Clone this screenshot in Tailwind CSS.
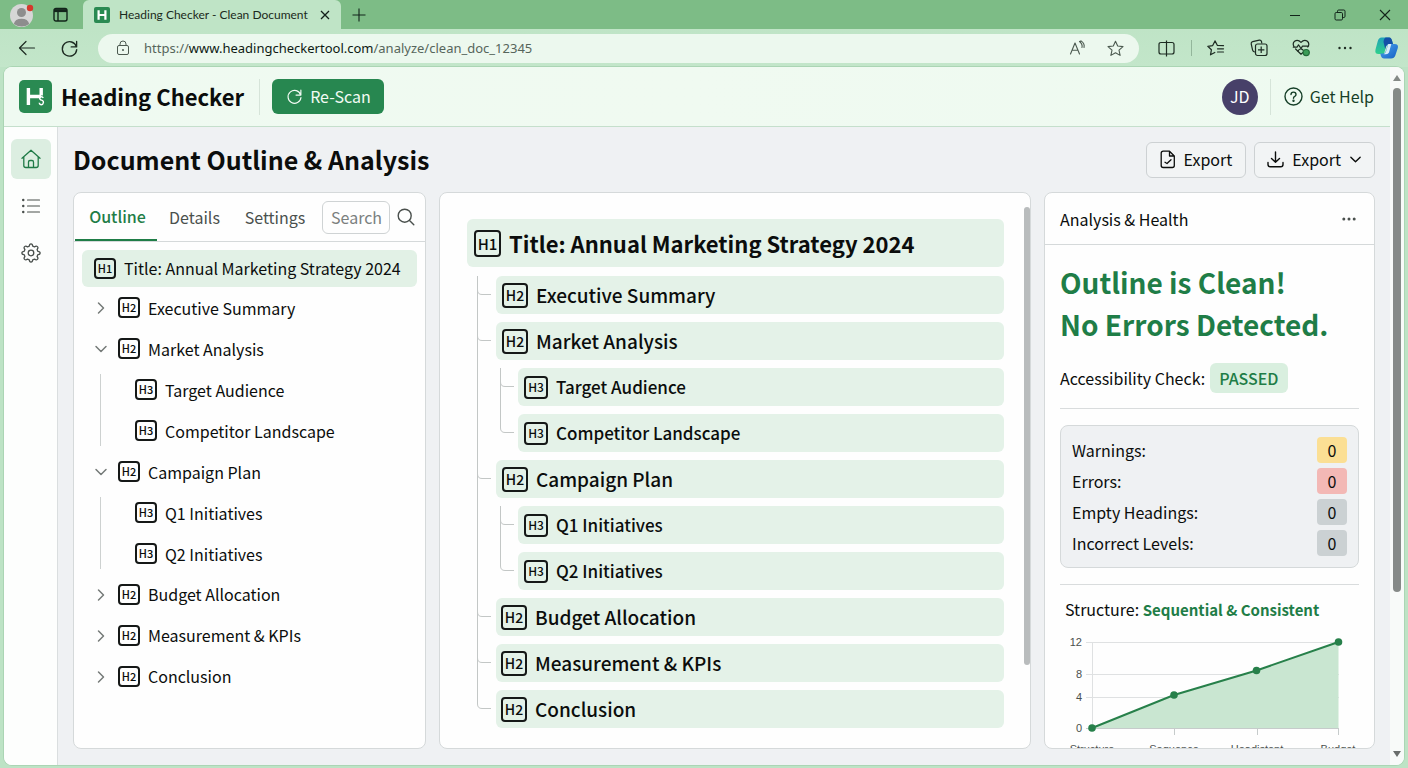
<!DOCTYPE html>
<html lang="en">
<head>
<meta charset="utf-8">
<meta name="viewport" content="width=device-width, initial-scale=1">
<title>Heading Checker - Clean Document</title>
<script src="https://cdn.jsdelivr.net/npm/@tailwindcss/browser@4"></script>
</head>
<body class="flex h-screen min-h-[600px] flex-col overflow-hidden bg-[#bde3c5] font-['Noto_Sans_CJK_SC','Noto_Sans',sans-serif] text-[16px] leading-6 text-[#0b0d0c]">

<!-- Shared symbols -->
<svg class="hidden" aria-hidden="true">
  <symbol id="chev-right" viewBox="0 0 14 14"><path d="M4.5 2 L9.5 7 L4.5 12" fill="none" stroke="currentColor" stroke-width="1.5" stroke-linecap="round" stroke-linejoin="round"/></symbol>
  <symbol id="chev-down" viewBox="0 0 14 14"><path d="M2 4.5 L7 9.5 L12 4.5" fill="none" stroke="currentColor" stroke-width="1.5" stroke-linecap="round" stroke-linejoin="round"/></symbol>
  <symbol id="rail" viewBox="0 0 30 46"><path d="M10.5 0 V46" fill="none" stroke="#c3c7c6"/></symbol>
  <symbol id="branch" viewBox="0 0 30 46"><path d="M10.5 0 V46 M10.5 14 Q10.5 18.5 15 18.5 H24" fill="none" stroke="#c3c7c6"/></symbol>
  <symbol id="branch-end" viewBox="0 0 30 46"><path d="M10.5 0 V14 Q10.5 18.5 15 18.5 H24" fill="none" stroke="#c3c7c6"/></symbol>
  <symbol id="sub" viewBox="0 0 22 46"><path d="M4.5 0 V46 M4.5 14 Q4.5 18.5 9 18.5 H18" fill="none" stroke="#c3c7c6"/></symbol>
  <symbol id="sub-end" viewBox="0 0 22 46"><path d="M4.5 0 V14 Q4.5 18.5 9 18.5 H18" fill="none" stroke="#c3c7c6"/></symbol>
  <symbol id="reload" viewBox="0 0 20 20"><path d="M17.3 8.2 A7.6 7.6 0 1 0 17.6 11.2 M17.5 2.6 V8.3 H11.8" fill="none" stroke="currentColor" stroke-width="1.4" stroke-linecap="round" stroke-linejoin="round"/></symbol>
</svg>

<!-- Tab strip -->
<div class="flex h-[29px] shrink-0 items-stretch bg-[#7dbc86]">
  <div class="flex w-[83px] items-center gap-5 rounded-br-md pl-2.5">
    <button aria-label="Profile" class="block">
      <svg width="24" height="24" viewBox="0 0 24 24"><circle cx="11.5" cy="12.5" r="11.5" fill="#d6d6d6"/><circle cx="11.5" cy="9.5" r="4.5" fill="#8d8d8d"/><path d="M3.8 21 Q5 15.8 11.5 15.8 T19.2 21 Q12 26 3.8 21Z" fill="#8d8d8d"/><circle cx="20" cy="5" r="3.2" fill="#d5382c"/></svg>
    </button>
    <button aria-label="Tab actions" class="-ml-1.5 block">
      <svg width="24" height="16" viewBox="-5 0 24 16" fill="none" stroke="#12241a" stroke-width="1.4"><rect x="1" y="1.5" width="13" height="12.5" rx="2"/><path d="M1 3.6 H14" stroke-width="3"/><path d="M5 5 V14"/></svg>
    </button>
  </div>
  <div class="flex w-[258px] items-center rounded-t-md bg-[#bfe4c6] pl-[11px]">
    <svg width="16" height="16" viewBox="0 0 16 16"><rect width="16" height="16" rx="2" fill="#2a8a52"/><path d="M4.6 3.3 V12.7 M11.4 3.3 V12.7 M4.6 8 H11.4" stroke="#fff" stroke-width="2.2"/></svg>
    <span class="ml-[9px] font-['Lato','Noto_Sans',sans-serif] text-xs whitespace-nowrap text-[#1b2a20]">Heading Checker - Clean Document</span>
    <button aria-label="Close tab" class="mr-2.5 ml-auto block"><svg width="12" height="12" viewBox="0 0 12 12"><path d="M2 2 L10 10 M10 2 L2 10" stroke="#12201a" stroke-width="1.3"/></svg></button>
  </div>
  <button aria-label="New tab" class="ml-[11px]"><svg width="14" height="14" viewBox="0 0 14 14"><path d="M7 .5 V13.5 M.5 7 H13.5" stroke="#12241a" stroke-width="1.1"/></svg></button>
  <div class="ml-auto flex items-center gap-[33px] pr-[17px]">
    <button aria-label="Minimize"><svg width="12" height="12" viewBox="0 0 12 12"><path d="M1 6.5 H11" stroke="#12241a"/></svg></button>
    <button aria-label="Restore"><svg width="12" height="12" viewBox="0 0 12 12" fill="none" stroke="#12241a"><rect x="1" y="3.5" width="7.5" height="7.5" rx="1.2"/><path d="M3.5 3.5 V2.2 Q3.5 1 4.7 1 H9.8 Q11 1 11 2.2 V7.3 Q11 8.5 9.8 8.5 H8.5"/></svg></button>
    <button aria-label="Close window"><svg width="12" height="12" viewBox="0 0 12 12"><path d="M1 1 L11 11 M11 1 L1 11" stroke="#12241a" stroke-width="1.1"/></svg></button>
  </div>
</div>

<!-- Address bar -->
<div class="flex h-[38px] shrink-0 items-center bg-linear-to-b from-[#bfe4c6] to-[#c3e6ca] pr-[9px] pl-[18px] text-[#1d2b22]">
  <button aria-label="Back"><svg width="18" height="16" viewBox="0 0 18 16" fill="none" stroke="currentColor" stroke-width="1.2" stroke-linecap="round" stroke-linejoin="round"><path d="M16.5 8 H1.5 M8 1.5 L1.5 8 L8 14.5"/></svg></button>
  <button aria-label="Reload" class="ml-6"><svg width="19" height="19"><use href="#reload"/></svg></button>
  <div class="ml-[19px] flex h-[29px] flex-1 items-center rounded-full bg-[#ecf8ee] pr-[15px] pl-[18px]">
    <svg width="14" height="16" viewBox="0 0 14 16" fill="none" stroke="#4c5a50"><rect x="1.5" y="5.5" width="11" height="9" rx="1.5"/><path d="M4 5.5 V4 Q4 1 7 1 T10 4 V5.5"/><circle cx="7" cy="10" r=".6" fill="#4c5a50"/></svg>
    <div role="textbox" aria-label="Address" contenteditable="true" spellcheck="false" class="ml-3.5 flex-1 font-['Noto_Sans','Open_Sans',sans-serif] text-[13px] text-[#56655b]">https://<span class="text-[#0e1a13]">www.headingcheckertool.com</span>/analyze/clean_doc_12345</div>
    <button aria-label="Read aloud"><svg width="18" height="16" viewBox="0 0 18 16" fill="none" stroke="#4c5a50" stroke-width="1.1" stroke-linecap="round" stroke-linejoin="round"><path d="M1.5 14 L6 3 L10.5 14 M3 10.3 H9"/><path d="M10.5 1.5 Q13.8 4 13 7.5 M12 .9 Q16 3.5 15 7.5 M10.5 1.5 L12 .9"/></svg></button>
    <button aria-label="Add to favourites" class="ml-5"><svg width="17" height="17" viewBox="0 0 17 17" fill="none" stroke="#4c5a50" stroke-width="1.1" stroke-linejoin="round"><path d="M8.5 1.2 L10.7 6 L16 6.6 L12 10.1 L13.1 15.4 L8.5 12.7 L3.9 15.4 L5 10.1 L1 6.6 L6.3 6 Z"/></svg></button>
  </div>
  <button aria-label="Split screen" class="ml-[19px]"><svg width="17" height="17" viewBox="0 0 17 17" fill="none" stroke="currentColor" stroke-width="1.2"><path d="M8.5 2.5 H3 Q1 2.5 1 4.5 V12 Q1 14 3 14 H8.5 M8.5 2.5 H14 Q16 2.5 16 4.5 V12 Q16 14 14 14 H8.5 M8.5 .5 V16.5"/></svg></button>
  <span class="ml-4 h-4 w-px bg-[#93b69b]"></span>
  <button aria-label="Favourites" class="ml-[15px]"><svg width="18" height="17" viewBox="0 0 18 17" fill="none" stroke="currentColor" stroke-width="1.2" stroke-linejoin="round" stroke-linecap="round"><path d="M10.3 5.3 L8 .9 L5.7 5.6 L.8 6.3 L4.4 9.8 L3.5 14.8 L7.8 12.5 M10.3 5.3 L16.5 5.6 M10.5 8.8 H16.5 M10.5 12 H16.5"/></svg></button>
  <button aria-label="Collections" class="ml-[25px]"><svg width="18" height="18" viewBox="0 0 18 18" fill="none" stroke="currentColor" stroke-width="1.2"><path d="M4.8 12.8 Q3 13 2.6 11.2 L1.2 4.8 Q.9 3 2.7 2.6 L9.3 1.2 Q11 .9 11.5 2.5 L11.8 4.5"/><rect x="5.5" y="5" width="11.500" height="11.500" rx="2"/><path d="M11.2 7.6 V14 M8 10.8 H14.4"/></svg></button>
  <button aria-label="Browser essentials" class="ml-6"><svg width="19" height="18" viewBox="0 0 19 18" fill="none" stroke="currentColor" stroke-width="1.2" stroke-linejoin="round" stroke-linecap="round"><path d="M2.2 8 Q0 4.5 2.6 2.3 Q5.8 0 9 3.3 Q12.2 0 15.4 2.3 Q18 4.8 15.8 8 M1.3 8.2 H5 L6.5 5.8 L9 9.5 L10.5 7.2 H16.5 M3.6 10 L9 15.2 L11 13.5"/><path d="M6 12 Q8 8.500 11 11"/><circle cx="14.2" cy="13.6" r="3.1" fill="#3b9c57" stroke="#226b39"/></svg></button>
  <button aria-label="Settings and more" class="ml-[26px]"><svg width="16" height="16" viewBox="0 0 16 16" fill="currentColor"><circle cx="2.5" cy="8" r="1.2"/><circle cx="8" cy="8" r="1.2"/><circle cx="13.5" cy="8" r="1.2"/></svg></button>
  <button aria-label="Copilot" class="ml-[21px]">
    <svg width="25" height="24" viewBox="0 0 25 24">
      <defs><linearGradient id="cg" x1="0" y1="0" x2="0" y2="1"><stop offset="0" stop-color="#1fa1b8"/><stop offset="1" stop-color="#2fd08c"/></linearGradient><linearGradient id="cb" x1="0" y1="0" x2="1" y2="1"><stop offset="0" stop-color="#4aa3ee"/><stop offset="1" stop-color="#1560c4"/></linearGradient></defs>
      <path d="M7.5 1.500 H15 Q17 1.500 18 5 L19 8 H15 Q12.8 8 12 10.5 L10 18 H4.5 Q.5 18 1.5 13.5 L3.8 5 Q4.8 1.500 7.5 1.500Z" fill="url(#cg)"/>
      <path d="M12 1.500 H15.5 Q17.4 1.500 18.2 5 L19 8 H15 Q12.8 8 12 10.5 L11.2 13 L9.5 6 Q10 1.500 12 1.500Z" fill="#1450a8"/>
      <path d="M17 22.500 H10 Q7.6 22.500 6.8 19.500 L6.300 17.500 H9 Q11.300 17.500 12 15 L14 8 H20.500 Q24.800 8 23.800 12 L21.300 19.500 Q20.300 22.500 17 22.500Z" fill="url(#cb)"/>
      <path d="M14.300 8 H17.300 L15 16.500 Q14.300 18.300 12 18.300 H9.500 Q11.600 17.300 12.200 15Z" fill="#d8ecf8"/>
    </svg>
  </button>
</div>

<!-- Page viewport -->
<div class="mr-1 mb-[3px] ml-1 flex min-h-0 flex-1 overflow-hidden rounded-lg bg-[#f8faf9] shadow-[0_0_0_1px_#abd5b4]">
  <div class="flex min-w-0 flex-1 flex-col">

    <header class="flex h-[60px] shrink-0 items-center border-b border-[#c5dfcc] bg-linear-to-r from-[#effaf1] via-[#f0faf1] to-[#eefaf0] pr-4 pl-[15px]">
      <svg width="33" height="33" viewBox="0 0 33 33"><rect width="33" height="33" rx="5" fill="#2a8a52"/><path d="M9.400 8 V25 M22.200 8 V15.500 M9.400 16.500 H22" stroke="#fff" stroke-width="3.400" fill="none"/><path d="M24.200 18 Q23.500 16.300 21.800 16.800 Q20 17.600 21 19.200 Q21.600 19.900 22.600 20.100 Q24.600 20.600 24.400 22.600 Q24 24.800 22 24.700 Q20.300 24.500 20.200 22.800" stroke="#fff" stroke-width="1.400" fill="none"/></svg>
      <span class="ml-[9px] pb-0.5 text-[22px] font-bold whitespace-nowrap">Heading Checker</span>
      <span class="ml-[15px] h-9 w-px bg-[#d6e4d9]"></span>
      <button class="ml-3 flex h-[35px] items-center gap-[7px] rounded-md bg-[#278750] pr-[13px] pl-3.5 text-[#f2fbf4]">
        <svg width="17" height="17"><use href="#reload"/></svg><span class="pb-0.5">Re-Scan</span>
      </button>
      <button aria-label="Account JD" class="ml-auto size-9 rounded-full bg-[#474069] pb-0.5 text-white">JD</button>
      <span class="ml-3 h-9 w-px bg-[#d6e4d9]"></span>
      <a href="#help" class="ml-[13px] flex items-center gap-[7px] text-[#163f28]">
        <svg width="19" height="19" viewBox="0 0 19 19" fill="none" stroke="currentColor" stroke-width="1.4" stroke-linecap="round"><circle cx="9.5" cy="9.5" r="8.5"/><path d="M7 7.6 Q7 5.1 9.5 5.1 T12 7.5 Q12 8.7 10.7 9.4 Q9.5 10 9.5 11.2"/><circle cx="9.5" cy="13.7" r=".5" fill="currentColor"/></svg><span class="pb-0.5">Get Help</span>
      </a>
    </header>

    <div class="flex min-h-0 flex-1">
      <nav aria-label="Main" class="flex w-[54px] shrink-0 flex-col items-center gap-[7px] border-r border-[#dadedf] bg-[#fdfefd] pt-3 text-[#4a504d]">
        <a href="#home" aria-label="Home" class="flex size-10 items-center justify-center rounded-md bg-[#dceee1] text-[#1f7a46]"><svg width="20" height="20" viewBox="0 0 20 20" fill="none" stroke="currentColor" stroke-width="1.3" stroke-linejoin="round" stroke-linecap="round"><path d="M1 9.2 L10 1.2 L19 9.2 M2.8 7.8 V16.5 Q2.8 18.5 4.8 18.5 H15.2 Q17.2 18.5 17.2 16.5 V7.8 M7.5 18.3 V13 Q7.5 11.5 9 11.5 H11 Q12.5 11.5 12.5 13 V18.3"/></svg></a>
        <a href="#outline" aria-label="Outline" class="flex size-10 items-center justify-center"><svg width="20" height="16" viewBox="0 0 20 16" fill="none" stroke="currentColor" stroke-width="1.2" stroke-linecap="round"><path d="M6.5 2 H18.5 M6.5 8 H18.5 M6.5 14 H18.5"/><path d="M2.2 2 H2.3 M2.2 8 H2.3 M2.2 14 H2.3" stroke-width="2.4"/></svg></a>
        <a href="#settings" aria-label="Preferences" class="flex size-10 items-center justify-center"><svg width="20" height="20" viewBox="0 0 20 20" fill="none" stroke="currentColor" stroke-width="1.3" stroke-linejoin="round"><circle cx="10" cy="10" r="2.8"/><path d="M8.3 3.2 Q8.4 .9 10 .9 T11.7 3.2 L13.5 3.9 Q15.2 2.4 16.4 3.6 T16.1 6.5 L16.8 8.3 Q19.1 8.4 19.1 10 T16.8 11.7 L16.1 13.5 Q17.6 15.2 16.4 16.4 T13.5 16.1 L11.7 16.8 Q11.6 19.1 10 19.1 T8.3 16.8 L6.5 16.1 Q4.8 17.6 3.6 16.4 T3.9 13.5 L3.2 11.7 Q.9 11.6 .9 10 T3.2 8.3 L3.9 6.5 Q2.4 4.8 3.6 3.6 T6.5 3.9 Z"/></svg></a>
      </nav>

      <main class="flex min-w-0 flex-1 flex-col bg-[#eff1f3] pr-[15px] pb-4 pl-[15px]">
        <div class="flex h-[65px] shrink-0 items-center">
          <h1 class="pb-0.5 text-[25px] leading-8 font-bold whitespace-nowrap">Document Outline &amp; Analysis</h1>
          <button class="ml-auto flex h-9 items-center rounded-md border border-[#cdd1d3] bg-[#f2f4f5] px-[13px]">
            <svg width="16" height="19" viewBox="0 0 16 19" fill="none" stroke="currentColor" stroke-width="1.3" stroke-linejoin="round" stroke-linecap="round"><path d="M9.5 1.2 H3.2 Q1.2 1.2 1.2 3.2 V15.5 Q1.2 17.5 3.2 17.5 H12.3 Q14.3 17.5 14.3 15.5 V6 L9.5 1.2 V6 H14.3 M5 12.3 L7 13.5 L11 9.7"/></svg>
            <span class="ml-2 pb-0.5">Export</span>
          </button>
          <button class="ml-2 flex h-9 items-center rounded-md border border-[#cdd1d3] bg-[#f2f4f5] px-3">
            <svg width="17" height="17" viewBox="0 0 17 17" fill="none" stroke="currentColor" stroke-width="1.4" stroke-linejoin="round" stroke-linecap="round"><path d="M8.5 1 V11 M4.5 7.5 L8.5 11.3 L12.5 7.5 M1 11.5 V13.5 Q1 15.8 3.3 15.8 H13.7 Q16 15.8 16 13.5 V11.5"/></svg>
            <span class="mr-2 ml-2 pb-0.5">Export</span>
            <svg width="13" height="13"><use href="#chev-down"/></svg>
          </button>
        </div>

        <div class="flex min-h-0 flex-1 gap-[13px]">
          <!-- Outline panel -->
          <section class="w-[353px] shrink-0 overflow-hidden rounded-lg border border-[#d5d9da] bg-[#fefefe]">
            <div class="flex h-[49px] items-stretch border-b border-[#d5d9da] pr-2.5 pl-px text-[#4a504d]">
              <div role="tablist" class="flex">
                <button role="tab" aria-selected="true" class="w-[82px] border-b-2 border-[#1f7d47] pl-[3px] font-medium text-[#1f7d47]">Outline</button>
                <button role="tab" class="w-[74px] pl-px">Details</button>
                <button role="tab" class="w-[87px] pl-px">Settings</button>
              </div>
              <input type="text" aria-label="Search" placeholder="Search" class="ml-1 h-[33px] w-[68px] self-center rounded-md border border-[#cfd3d4] pl-2 placeholder:text-[#7b807e]">
              <button aria-label="Run search" class="ml-auto"><svg width="18" height="18" viewBox="0 0 18 18" fill="none" stroke="currentColor" stroke-width="1.4" stroke-linecap="round"><circle cx="7.7" cy="7.7" r="6.5"/><path d="M12.5 12.5 L16.8 16.8"/></svg></button>
            </div>
            <ul class="px-2 pt-2">
              <li class="flex h-[37px] items-center gap-2 rounded-md bg-[#e2f1e6] pl-3"><span class="flex h-[21px] w-[22px] items-center justify-center rounded border-2 border-[#151817] text-[11px] leading-none font-medium">H1</span><span class="pb-0.5 whitespace-nowrap">Title: Annual Marketing Strategy 2024</span></li>
              <li class="flex h-[41px] items-center gap-2 pl-3"><button aria-label="Expand Executive Summary" class="mr-0.5 text-[#757a78]"><svg width="14" height="14"><use href="#chev-right"/></svg></button><span class="flex h-[21px] w-[22px] items-center justify-center rounded border-2 border-[#151817] text-[11px] leading-none font-medium">H2</span><span>Executive Summary</span></li>
              <li>
                <div class="flex h-[41px] items-center gap-2 pl-3"><button aria-label="Collapse Market Analysis" class="mr-0.5 text-[#757a78]"><svg width="14" height="14"><use href="#chev-down"/></svg></button><span class="flex h-[21px] w-[22px] items-center justify-center rounded border-2 border-[#151817] text-[11px] leading-none font-medium">H2</span><span>Market Analysis</span></div>
                <ul class="my-[5px] ml-[18px] flex flex-col gap-5 border-l border-[#cdd1d0] py-[5px] pl-[34px]">
                  <li class="flex h-[21px] items-center gap-2"><span class="flex h-[21px] w-[22px] items-center justify-center rounded border-2 border-[#151817] text-[11px] leading-none font-medium">H3</span><span>Target Audience</span></li>
                  <li class="flex h-[21px] items-center gap-2"><span class="flex h-[21px] w-[22px] items-center justify-center rounded border-2 border-[#151817] text-[11px] leading-none font-medium">H3</span><span>Competitor Landscape</span></li>
                </ul>
              </li>
              <li>
                <div class="flex h-[41px] items-center gap-2 pl-3"><button aria-label="Collapse Campaign Plan" class="mr-0.5 text-[#757a78]"><svg width="14" height="14"><use href="#chev-down"/></svg></button><span class="flex h-[21px] w-[22px] items-center justify-center rounded border-2 border-[#151817] text-[11px] leading-none font-medium">H2</span><span>Campaign Plan</span></div>
                <ul class="my-[5px] ml-[18px] flex flex-col gap-5 border-l border-[#cdd1d0] py-[5px] pl-[34px]">
                  <li class="flex h-[21px] items-center gap-2"><span class="flex h-[21px] w-[22px] items-center justify-center rounded border-2 border-[#151817] text-[11px] leading-none font-medium">H3</span><span>Q1 Initiatives</span></li>
                  <li class="flex h-[21px] items-center gap-2"><span class="flex h-[21px] w-[22px] items-center justify-center rounded border-2 border-[#151817] text-[11px] leading-none font-medium">H3</span><span>Q2 Initiatives</span></li>
                </ul>
              </li>
              <li class="flex h-[41px] items-center gap-2 pl-3"><button aria-label="Expand Budget Allocation" class="mr-0.5 text-[#757a78]"><svg width="14" height="14"><use href="#chev-right"/></svg></button><span class="flex h-[21px] w-[22px] items-center justify-center rounded border-2 border-[#151817] text-[11px] leading-none font-medium">H2</span><span class="pb-0.5">Budget Allocation</span></li>
              <li class="flex h-[41px] items-center gap-2 pl-3"><button aria-label="Expand Measurement &amp; KPIs" class="mr-0.5 text-[#757a78]"><svg width="14" height="14"><use href="#chev-right"/></svg></button><span class="flex h-[21px] w-[22px] items-center justify-center rounded border-2 border-[#151817] text-[11px] leading-none font-medium">H2</span><span class="pb-0.5">Measurement &amp; KPIs</span></li>
              <li class="flex h-[41px] items-center gap-2 pl-3"><button aria-label="Expand Conclusion" class="mr-0.5 text-[#757a78]"><svg width="14" height="14"><use href="#chev-right"/></svg></button><span class="flex h-[21px] w-[22px] items-center justify-center rounded border-2 border-[#151817] text-[11px] leading-none font-medium">H2</span><span class="pb-0.5">Conclusion</span></li>
            </ul>
          </section>

          <!-- Document structure -->
          <section class="flex min-w-0 flex-1 overflow-hidden rounded-lg border border-[#d5d9da] bg-[#fefefe] pl-[27px]">
            <div class="min-w-0 flex-1 pt-[26px] font-medium">
              <h2 class="mb-[9px] flex h-12 items-center gap-2 rounded-md bg-[#e4f2e8] pl-[7px] text-[22px] font-bold"><span class="flex h-[27px] w-[27px] items-center justify-center rounded border-2 border-[#151817] text-[15px] leading-none font-medium">H1</span>Title: Annual Marketing Strategy 2024</h2>
              <ul class="text-[19px]">
                <li class="flex h-[46px]"><svg width="29" height="46" class="shrink-0"><use href="#branch" width="30" height="46"/></svg><div class="flex h-[38px] flex-1 items-center gap-2 rounded-md bg-[#e4f2e8] pl-1.5"><span class="flex h-[25px] w-[26px] items-center justify-center rounded border-2 border-[#151817] text-[14px] leading-none">H2</span>Executive Summary</div></li>
                <li class="flex h-[46px]"><svg width="29" height="46" class="shrink-0"><use href="#branch" width="30" height="46"/></svg><div class="flex h-[38px] flex-1 items-center gap-2 rounded-md bg-[#e4f2e8] pl-1.5"><span class="flex h-[25px] w-[26px] items-center justify-center rounded border-2 border-[#151817] text-[14px] leading-none">H2</span>Market Analysis</div></li>
                <li class="flex h-[46px] text-[17px]"><svg width="29" height="46" class="shrink-0"><use href="#rail" width="30" height="46"/></svg><svg width="22" height="46" class="shrink-0"><use href="#sub" width="22" height="46"/></svg><div class="flex h-[38px] flex-1 items-center gap-2 rounded-md bg-[#e4f2e8] pl-1.5"><span class="flex h-[23px] w-[24px] items-center justify-center rounded border-2 border-[#151817] text-[12px] leading-none">H3</span>Target Audience</div></li>
                <li class="flex h-[46px] text-[17px]"><svg width="29" height="46" class="shrink-0"><use href="#rail" width="30" height="46"/></svg><svg width="22" height="46" class="shrink-0"><use href="#sub-end" width="22" height="46"/></svg><div class="flex h-[38px] flex-1 items-center gap-2 rounded-md bg-[#e4f2e8] pl-1.5"><span class="flex h-[23px] w-[24px] items-center justify-center rounded border-2 border-[#151817] text-[12px] leading-none">H3</span>Competitor Landscape</div></li>
                <li class="flex h-[46px]"><svg width="29" height="46" class="shrink-0"><use href="#branch" width="30" height="46"/></svg><div class="flex h-[38px] flex-1 items-center gap-2 rounded-md bg-[#e4f2e8] pl-1.5"><span class="flex h-[25px] w-[26px] items-center justify-center rounded border-2 border-[#151817] text-[14px] leading-none">H2</span>Campaign Plan</div></li>
                <li class="flex h-[46px] text-[17px]"><svg width="29" height="46" class="shrink-0"><use href="#rail" width="30" height="46"/></svg><svg width="22" height="46" class="shrink-0"><use href="#sub" width="22" height="46"/></svg><div class="flex h-[38px] flex-1 items-center gap-2 rounded-md bg-[#e4f2e8] pl-1.5"><span class="flex h-[23px] w-[24px] items-center justify-center rounded border-2 border-[#151817] text-[12px] leading-none">H3</span>Q1 Initiatives</div></li>
                <li class="flex h-[46px] text-[17px]"><svg width="29" height="46" class="shrink-0"><use href="#rail" width="30" height="46"/></svg><svg width="22" height="46" class="shrink-0"><use href="#sub-end" width="22" height="46"/></svg><div class="flex h-[38px] flex-1 items-center gap-2 rounded-md bg-[#e4f2e8] pl-1.5"><span class="flex h-[23px] w-[24px] items-center justify-center rounded border-2 border-[#151817] text-[12px] leading-none">H3</span>Q2 Initiatives</div></li>
                <li class="flex h-[46px]"><svg width="29" height="46" class="shrink-0"><use href="#branch" width="30" height="46"/></svg><div class="flex h-[38px] flex-1 items-center gap-2 rounded-md bg-[#e4f2e8] pl-[5px]"><span class="flex h-[25px] w-[26px] items-center justify-center rounded border-2 border-[#151817] text-[14px] leading-none">H2</span>Budget Allocation</div></li>
                <li class="flex h-[46px]"><svg width="29" height="46" class="shrink-0"><use href="#branch" width="30" height="46"/></svg><div class="flex h-[38px] flex-1 items-center gap-2 rounded-md bg-[#e4f2e8] pl-[5px]"><span class="flex h-[25px] w-[26px] items-center justify-center rounded border-2 border-[#151817] text-[14px] leading-none">H2</span>Measurement &amp; KPIs</div></li>
                <li class="flex h-[46px]"><svg width="29" height="46" class="shrink-0"><use href="#branch-end" width="30" height="46"/></svg><div class="flex h-[38px] flex-1 items-center gap-2 rounded-md bg-[#e4f2e8] pl-[5px]"><span class="flex h-[25px] w-[26px] items-center justify-center rounded border-2 border-[#151817] text-[14px] leading-none">H2</span>Conclusion</div></li>
              </ul>
            </div>
            <div class="ml-5 w-1.5 shrink-0 pt-3.5"><div class="h-[458px] rounded-full bg-[#b9bcbd]"></div></div>
          </section>

          <!-- Analysis -->
          <aside class="w-[331px] shrink-0 overflow-hidden rounded-lg border border-[#d5d9da] bg-[#fefefe]">
            <div class="flex h-[52px] items-center justify-between border-b border-[#d5d9da] pr-[17px] pl-[15px]">
              <h2>Analysis &amp; Health</h2>
              <button aria-label="More options"><svg width="16" height="16" viewBox="0 0 16 16" fill="#4a504d"><circle cx="2.8" cy="8" r="1.5"/><circle cx="8" cy="8" r="1.5"/><circle cx="13.2" cy="8" r="1.5"/></svg></button>
            </div>
            <div class="px-[15px] pt-4">
              <p class="text-[28px] leading-[42px] font-bold whitespace-nowrap text-[#1f7d47]">Outline is Clean!<br>No Errors Detected.</p>
              <p class="mt-[18px] flex items-center gap-[5px]">Accessibility Check: <span class="flex h-[30px] items-center rounded-md bg-[#d9efdf] px-[9px] font-medium text-[#1f7d47]">PASSED</span></p>
              <hr class="mt-[15px] border-[#d9dcdd]">
              <dl class="mt-4 flex flex-col gap-[5px] rounded-lg border border-[#d5d9da] bg-[#eff1f3] px-[11px] py-[11px]">
                <div class="flex items-center justify-between"><dt>Warnings:</dt><dd class="flex h-[26px] w-[30px] items-center justify-center rounded bg-[#fbdf94]">0</dd></div>
                <div class="flex items-center justify-between"><dt>Errors:</dt><dd class="flex h-[26px] w-[30px] items-center justify-center rounded bg-[#f3b8b5]">0</dd></div>
                <div class="flex items-center justify-between"><dt>Empty Headings:</dt><dd class="flex h-[26px] w-[30px] items-center justify-center rounded bg-[#cbd1d3]">0</dd></div>
                <div class="flex items-center justify-between"><dt>Incorrect Levels:</dt><dd class="flex h-[26px] w-[30px] items-center justify-center rounded bg-[#cbd1d3]">0</dd></div>
              </dl>
              <hr class="mt-4 border-[#d9dcdd]">
              <h3 class="mt-3 ml-[5px] whitespace-nowrap">Structure: <span class="text-[15px] font-bold text-[#1f7d47]">Sequential &amp; Consistent</span></h3>
              <svg class="mt-2" width="300" height="130" viewBox="0 0 300 130" font-family="'Liberation Sans',Arial,sans-serif" font-size="11" fill="#4a504d" role="img" aria-label="Structure chart">
                <path d="M26 12.5 H279 M26 44.5 H279 M26 67.5 H279 M32.5 12.5 V98" stroke="#dfe1e2" fill="none"/>
                <path d="M32 98 L114 65 L196.500 40.500 L278.500 12 V98 Z" fill="#c9e6d1"/>
                <path d="M26 98.500 H279 M114.500 98 V105 M197.500 98 V105 M278.500 98 V105" stroke="#c6cbcb" fill="none"/>
                <path d="M32 98 L114 65 L196.500 40.500 L278.500 12" stroke="#27804a" stroke-width="2" fill="none"/>
                <g fill="#27804a"><circle cx="32" cy="98" r="3.800"/><circle cx="114" cy="65" r="3.800"/><circle cx="196.500" cy="40.500" r="3.800"/><circle cx="278.500" cy="12" r="3.800"/></g>
                <g text-anchor="end"><text x="22" y="16">12</text><text x="22" y="48">8</text><text x="22" y="71">4</text><text x="22" y="102">0</text></g>
                <g text-anchor="middle"><text x="32" y="123">Structure</text><text x="114" y="123">Sequence</text><text x="197" y="123">Headistent</text><text x="278" y="123">Budget</text></g>
              </svg>
            </div>
          </aside>
        </div>
      </main>
    </div>
  </div>

  <!-- Page scrollbar -->
  <div class="flex w-[14px] shrink-0 flex-col items-center bg-[#f8faf9] pt-2 pb-2">
    <svg width="8" height="6" viewBox="0 0 8 6" class="shrink-0"><path d="M4 0 L8 6 H0Z" fill="#858987"/></svg>
    <div class="mt-[7px] h-[504px] w-2 rounded-full bg-[#868a88]"></div>
    <svg width="8" height="6" viewBox="0 0 8 6" class="mt-auto shrink-0"><path d="M4 6 L8 0 H0Z" fill="#6a6e6c"/></svg>
  </div>
</div>
</body>
</html>
